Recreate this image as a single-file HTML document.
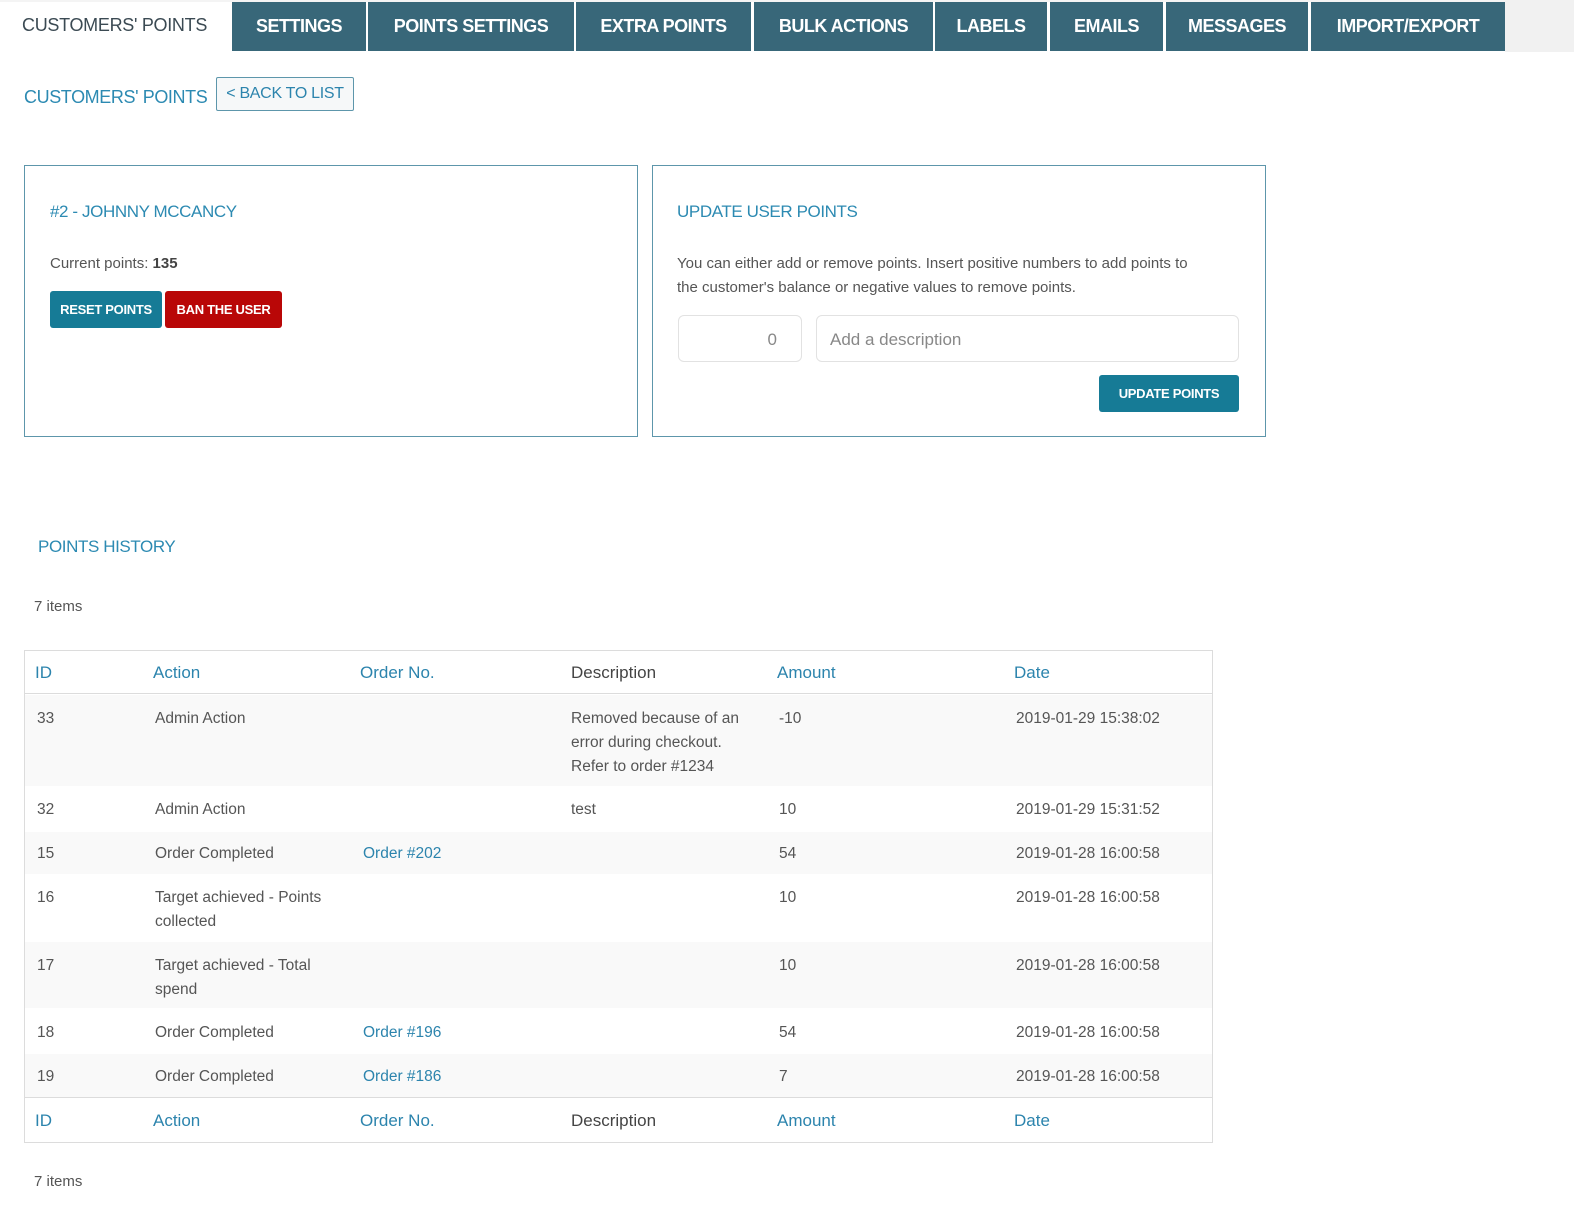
<!DOCTYPE html>
<html><head><meta charset="utf-8"><style>
*{box-sizing:border-box;margin:0;padding:0}
body{width:1574px;height:1230px;background:#fff;font-family:"Liberation Sans",sans-serif;color:#555;position:relative;overflow:hidden}
.a{position:absolute}
.tab{position:absolute;top:2px;height:49px;background:#386779;color:#fff;font-size:18px;display:flex;align-items:center;justify-content:center;letter-spacing:-0.5px;font-weight:bold}
.h{color:#2c8ab2;font-size:18px;letter-spacing:-0.4px}
.box{position:absolute;border:1px solid #5d96ab;background:#fff}
.btn{position:absolute;color:#fff;font-size:13px;font-weight:bold;display:flex;align-items:center;justify-content:center;border-radius:3px;letter-spacing:-0.3px}
.row{position:absolute;left:25px;width:1187px}
.c{position:absolute;font-size:15.5px;line-height:24px}
.lk{color:#2c84ad}
</style></head><body>
<div class="a" style="left:1505px;top:0;width:69px;height:52px;background:#f1f1f1"></div>
<div class="a" style="left:0;top:0;width:1505px;height:2px;background:#f4f4f4"></div>
<div class="a" style="left:22px;top:15px;font-size:18px;color:#3b4a53;letter-spacing:-0.3px">CUSTOMERS' POINTS</div>
<div class="tab" style="left:232px;width:134px">SETTINGS</div>
<div class="tab" style="left:368px;width:206px">POINTS SETTINGS</div>
<div class="tab" style="left:576px;width:175px">EXTRA POINTS</div>
<div class="tab" style="left:754px;width:179px">BULK ACTIONS</div>
<div class="tab" style="left:935px;width:112px">LABELS</div>
<div class="tab" style="left:1050px;width:113px">EMAILS</div>
<div class="tab" style="left:1166px;width:142px">MESSAGES</div>
<div class="tab" style="left:1311px;width:194px">IMPORT/EXPORT</div>

<div class="a h" style="left:24px;top:87px">CUSTOMERS' POINTS</div>
<div class="a" style="left:216px;top:77px;width:138px;height:34px;border:1px solid #5d96ab;border-radius:2px;background:#f6f8f9;color:#2c84ad;font-size:16px;display:flex;align-items:center;justify-content:center;letter-spacing:-0.3px">&lt; BACK TO LIST</div>

<div class="box" style="left:24px;top:165px;width:614px;height:272px"></div>
<div class="a h" style="left:50px;top:202px;font-size:17px">#2 - JOHNNY MCCANCY</div>
<div class="a" style="left:50px;top:255px;font-size:15px;color:#555">Current points: <b style="color:#444">135</b></div>
<div class="btn" style="left:50px;top:291px;width:112px;height:37px;background:#167b96">RESET POINTS</div>
<div class="btn" style="left:165px;top:291px;width:117px;height:37px;background:#b90707">BAN THE USER</div>

<div class="box" style="left:652px;top:165px;width:614px;height:272px"></div>
<div class="a h" style="left:677px;top:202px;font-size:17px">UPDATE USER POINTS</div>
<div class="a" style="left:677px;top:252px;width:535px;font-size:15px;line-height:24px;color:#555">You can either add or remove points. Insert positive numbers to add points to the customer's balance or negative values to remove points.</div>
<div class="a" style="left:678px;top:315px;width:124px;height:47px;border:1px solid #e2e2e2;border-radius:6px;font-size:17px;color:#888;text-align:right;padding:14px 24px 0 0">0</div>
<div class="a" style="left:816px;top:315px;width:423px;height:47px;border:1px solid #e2e2e2;border-radius:6px;font-size:17px;color:#888;padding:14px 0 0 13px">Add a description</div>
<div class="btn" style="left:1099px;top:375px;width:140px;height:37px;background:#167b96">UPDATE POINTS</div>

<div class="a h" style="left:38px;top:537px;font-size:17px">POINTS HISTORY</div>
<div class="a" style="left:34px;top:598px;font-size:15px">7 items</div>

<div class="a" style="left:24px;top:650px;width:1189px;height:493px;border:1px solid #dcdcdc"></div>
<div class="row" style="top:651px;height:43px;border-bottom:1px solid #dcdcdc">
<div class="c lk" style="left:10px;top:10px;font-size:17px">ID</div>
<div class="c lk" style="left:128px;top:10px;font-size:17px">Action</div>
<div class="c lk" style="left:335px;top:10px;font-size:17px">Order No.</div>
<div class="c" style="left:546px;top:10px;font-size:17px;color:#444">Description</div>
<div class="c lk" style="left:752px;top:10px;font-size:17px">Amount</div>
<div class="c lk" style="left:989px;top:10px;font-size:17px">Date</div>
</div>
<div class="row" style="top:695px;height:91px;background:#f9f9f9">
<div class="c" style="left:12px;top:12px">33</div><div class="c" style="left:130px;top:12px">Admin Action</div>
<div class="c" style="left:546px;top:12px;width:190px">Removed because of an error during checkout. Refer to order #1234</div>
<div class="c" style="left:754px;top:12px">-10</div><div class="c" style="left:991px;top:12px">2019-01-29 15:38:02</div></div>
<div class="row" style="top:786px;height:46px">
<div class="c" style="left:12px;top:12px">32</div><div class="c" style="left:130px;top:12px">Admin Action</div>
<div class="c" style="left:546px;top:12px">test</div>
<div class="c" style="left:754px;top:12px">10</div><div class="c" style="left:991px;top:12px">2019-01-29 15:31:52</div></div>
<div class="row" style="top:832px;height:42px;background:#f9f9f9">
<div class="c" style="left:12px;top:10px">15</div><div class="c" style="left:130px;top:10px">Order Completed</div>
<div class="c lk" style="left:338px;top:10px">Order #202</div>
<div class="c" style="left:754px;top:10px">54</div><div class="c" style="left:991px;top:10px">2019-01-28 16:00:58</div></div>
<div class="row" style="top:874px;height:68px">
<div class="c" style="left:12px;top:12px">16</div><div class="c" style="left:130px;top:12px;width:190px">Target achieved - Points collected</div>
<div class="c" style="left:754px;top:12px">10</div><div class="c" style="left:991px;top:12px">2019-01-28 16:00:58</div></div>
<div class="row" style="top:942px;height:66px;background:#f9f9f9">
<div class="c" style="left:12px;top:12px">17</div><div class="c" style="left:130px;top:12px;width:190px">Target achieved - Total spend</div>
<div class="c" style="left:754px;top:12px">10</div><div class="c" style="left:991px;top:12px">2019-01-28 16:00:58</div></div>
<div class="row" style="top:1008px;height:46px">
<div class="c" style="left:12px;top:13px">18</div><div class="c" style="left:130px;top:13px">Order Completed</div>
<div class="c lk" style="left:338px;top:13px">Order #196</div>
<div class="c" style="left:754px;top:13px">54</div><div class="c" style="left:991px;top:13px">2019-01-28 16:00:58</div></div>
<div class="row" style="top:1054px;height:44px;background:#f9f9f9;border-bottom:1px solid #dcdcdc">
<div class="c" style="left:12px;top:11px">19</div><div class="c" style="left:130px;top:11px">Order Completed</div>
<div class="c lk" style="left:338px;top:11px">Order #186</div>
<div class="c" style="left:754px;top:11px">7</div><div class="c" style="left:991px;top:11px">2019-01-28 16:00:58</div></div>
<div class="row" style="top:1099px;height:43px">
<div class="c lk" style="left:10px;top:10px;font-size:17px">ID</div>
<div class="c lk" style="left:128px;top:10px;font-size:17px">Action</div>
<div class="c lk" style="left:335px;top:10px;font-size:17px">Order No.</div>
<div class="c" style="left:546px;top:10px;font-size:17px;color:#444">Description</div>
<div class="c lk" style="left:752px;top:10px;font-size:17px">Amount</div>
<div class="c lk" style="left:989px;top:10px;font-size:17px">Date</div>
</div>
<div class="a" style="left:34px;top:1173px;font-size:15px">7 items</div>
</body></html>
